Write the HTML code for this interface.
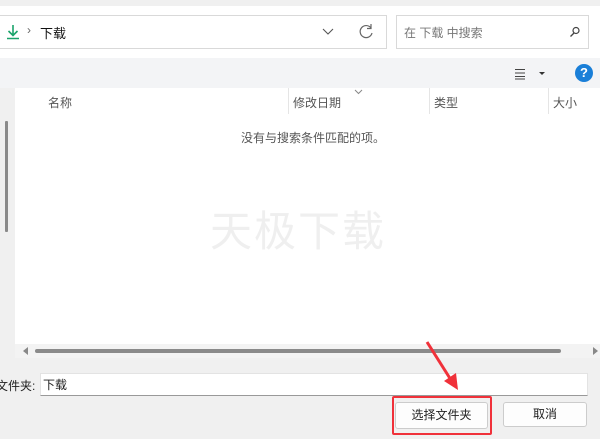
<!DOCTYPE html>
<html><head><meta charset="utf-8"><style>
*{margin:0;padding:0;box-sizing:border-box}
body{width:600px;height:439px;overflow:hidden;background:#f0f0f0;font-family:"Liberation Sans","Noto Sans CJK SC",sans-serif;font-size:12px;color:#222;position:relative}
.a{position:absolute}
</style></head><body>
<div class="a" style="left:0;top:6px;width:600px;height:52px;background:#fff"></div>
<div class="a" style="left:-2px;top:15px;width:389px;height:34px;border:1px solid #d9d9d9;background:#fff"></div>
<svg class="a" style="left:6px;top:23px" width="14" height="18"><path d="M7 2v10M2.5 8l4.5 4.5 4.5-4.5" stroke="#1aa36a" stroke-width="1.6" fill="none"/><path d="M1 15.5h12" stroke="#1aa36a" stroke-width="1.5"/></svg>
<div class="a" style="left:27px;top:23px;color:#666;font-size:12px">›</div>
<div class="a" style="left:40px;top:23px;font-size:13px;color:#111">下载</div>
<svg class="a" style="left:322px;top:28px" width="12" height="8"><path d="M1 1l5 5 5-5" stroke="#555" fill="none" stroke-width="1.1"/></svg>
<svg class="a" style="left:358px;top:23px" width="16" height="17"><path d="M13 5A6 6 0 1 0 14 10" stroke="#666" fill="none" stroke-width="1.2"/><path d="M13 1v4.5h-4" stroke="#666" fill="none" stroke-width="1.2"/></svg>
<div class="a" style="left:396px;top:15px;width:193px;height:34px;border:1px solid #d9d9d9;background:#fff"></div>
<div class="a" style="left:404px;top:24px;color:#777;font-size:12px">在 下载 中搜索</div>
<svg class="a" style="left:569px;top:26px" width="12" height="12"><circle cx="7" cy="4.5" r="3" stroke="#444" fill="none" stroke-width="1.2"/><path d="M5 7l-3.5 3.5" stroke="#444" stroke-width="1.3"/></svg>
<div class="a" style="left:0;top:58px;width:600px;height:30px;background:#f3f4f6"></div>
<svg class="a" style="left:515px;top:68px" width="32" height="12"><path d="M0 1.5h10M0 5h10M0 8.5h10M0 11h10" stroke="#444" stroke-width="1"/><path d="M24 4h6l-3 3z" fill="#333"/></svg>
<div class="a" style="left:575px;top:64px;width:18px;height:18px;border-radius:50%;background:#1a7fd8;color:#fff;font-size:13px;font-weight:bold;text-align:center;line-height:18px">?</div>
<div class="a" style="left:15px;top:88px;width:585px;height:270px;background:#fff"></div>
<div class="a" style="left:5px;top:121px;width:3px;height:111px;background:#8a8a8a;border-radius:1px"></div>
<div class="a" style="left:48px;top:94px;color:#555">名称</div>
<div class="a" style="left:288px;top:88px;width:1px;height:26px;background:#e5e5e5"></div>
<div class="a" style="left:293px;top:94px;color:#555">修改日期</div>
<svg class="a" style="left:354px;top:89px" width="9" height="6"><path d="M1 1l3.5 3.5L8 1" stroke="#888" fill="none"/></svg>
<div class="a" style="left:429px;top:88px;width:1px;height:26px;background:#e5e5e5"></div>
<div class="a" style="left:434px;top:94px;color:#555">类型</div>
<div class="a" style="left:548px;top:88px;width:1px;height:26px;background:#e5e5e5"></div>
<div class="a" style="left:553px;top:94px;color:#555">大小</div>
<div class="a" style="left:241px;top:129px;color:#555">没有与搜索条件匹配的项。</div>
<div class="a" style="left:210px;top:198px;color:#efefef;font-size:42px;letter-spacing:2px">天极下载</div>
<div class="a" style="left:15px;top:344px;width:585px;height:14px;background:#f3f3f3"></div>
<svg class="a" style="left:23px;top:347px" width="6" height="8"><path d="M5 0v8L0 4z" fill="#888"/></svg>
<div class="a" style="left:35px;top:349px;width:526px;height:4px;background:#8a8a8a;border-radius:2px"></div>
<svg class="a" style="left:593px;top:347px" width="6" height="8"><path d="M0 0v8l5-4z" fill="#888"/></svg>
<div class="a" style="left:-4px;top:377px;font-size:12px">文件夹:</div>
<div class="a" style="left:40px;top:373px;width:548px;height:23px;background:#fff;border:1px solid #e3e3e3;border-bottom-color:#999"></div>
<div class="a" style="left:43px;top:376px;font-size:12px">下载</div>
<div class="a" style="left:395px;top:402px;width:93px;height:27px;background:#fdfdfd;border:1px solid #ccc;border-radius:3px;text-align:center;line-height:25px">选择文件夹</div>
<div class="a" style="left:392px;top:396px;width:100px;height:39px;border:2px solid #f0313a;border-radius:2px"></div>
<div class="a" style="left:503px;top:402px;width:84px;height:25px;background:#fdfdfd;border:1px solid #ccc;border-radius:3px;text-align:center;line-height:23px">取消</div>
<svg class="a" style="left:420px;top:340px" width="50" height="56"><path d="M7 2L31 40" stroke="#f0313a" stroke-width="3"/><path d="M24 41l14 9-2-17z" fill="#f0313a"/></svg>
</body></html>
